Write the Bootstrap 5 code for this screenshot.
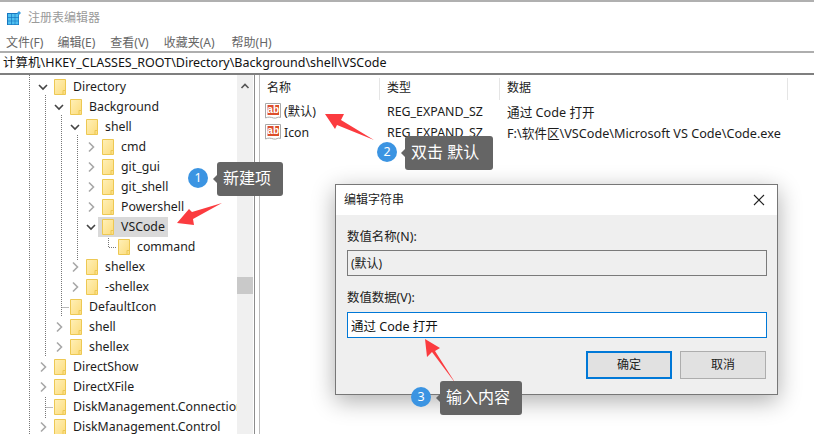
<!DOCTYPE html>
<html lang="zh-CN">
<head>
<meta charset="utf-8">
<title>注册表编辑器</title>
<link rel="stylesheet" href="https://cdn.jsdelivr.net/npm/bootstrap@5.3.0/dist/css/bootstrap.min.css">
<style>
html,body{height:434px;overflow:hidden;background:#fff}
body{font-family:"Noto Sans","Noto Sans CJK SC",sans-serif;font-size:12px;line-height:20px;color:#1c1c1c;position:relative}
.app-frame{height:434px;border-top:2px solid #b0b0b0}
.title-row{height:30px;padding-left:7px;gap:7px;color:#9a9a9a;font-size:12px;padding-top:1px}
.menu-row{height:20px;padding-left:6px;padding-top:1px;color:#666;flex:none}
.menu-row span{margin-right:14px}
.menu-row span:nth-child(2){margin-right:15px}
.menu-row span:nth-child(3){margin-right:15px}
.menu-row span:nth-child(4){margin-right:17px}
.addr-row{flex:none;border-top:2px solid #aeaeae;border-bottom:2px solid #7f7f7f;padding-left:3px;margin-top:-1px;font-size:12.5px;line-height:20px;color:#111;box-sizing:content-box;height:20px}
.main-row{flex:1;min-height:0}
.tree-pane{width:237px;flex:none;position:relative;overflow:hidden;padding-top:2px;font-size:12.3px}
.guide-svg{position:absolute;left:0;top:0}
.tree-row{height:20px;position:relative;white-space:nowrap}
.ind0{padding-left:35px}.ind1{padding-left:51px}.ind2{padding-left:67px}.ind3{padding-left:83px}.ind4{padding-left:99px}
.chev{width:16px;height:20px;flex:none}
.fold{width:14px;height:18px;flex:none;margin-left:2px;margin-right:6px}
.sel-name{background:#d9d9d9;padding-right:3px;margin-left:-1px;padding-left:1px;height:20px}
.sel-name .fold{margin-left:2px}
.scroll-col{width:16px;flex:none;background:#f0f0f0;position:relative}
.scroll-thumb{position:absolute;left:0;right:0;top:202px;height:17px;background:#c9c9c9}
.split-col{width:6px;flex:none;border-left:1px solid #8d8d8d;border-right:1px solid #bdbdbd;margin-left:1px}
.list-pane{flex:1;min-width:0;padding-left:0}
.list-head{height:26px;padding-top:3px}
.list-line{height:21px}
.colname{width:120px;flex:none;padding-left:7px;height:22px;border-right:1px solid #e5e5e5}
.colwide{width:288px;flex:none;padding-left:7px;height:22px;border-right:1px solid #e5e5e5}
.cell-a{width:120px;flex:none;padding-left:5px;gap:2px;font-size:12.3px}
.cell-b{width:120px;flex:none;padding-left:7px;font-size:12.4px;white-space:nowrap}
.cell-c{flex:1;padding-left:7px;white-space:nowrap;font-size:12.65px}
.dlg{position:absolute;left:335px;top:184px;width:443px;height:211px;background:#efefef;border:1px solid #777;box-shadow:0 6px 22px rgba(0,0,0,.32)}
.dlg-head{height:30px;background:#fff;padding:0 8px 0 8px}
.dlg-body{padding:10px 10px 0 11px;font-size:12.4px}
.dlg-label{height:20px;color:#222}
.lab-a{margin:2px 0 3px}
.lab-b{margin:1px 0 4px}
.dlg-field{height:26px;border-radius:0;font-size:12px;line-height:20px;padding:2px 3px;color:#222;font-family:inherit;box-shadow:none!important}
.dlg-field.ro{background:#efefef;border:1px solid #7a7a7a}
.dlg-field.on{background:#fff;border:1px solid #0078d7;color:#111;margin-bottom:13px;font-size:12.5px}
.dlg-gap{height:11px}
.dlg-btn{width:86px;height:28px;padding:0;border-radius:0;font-size:12px;line-height:20px;background:#e1e1e1;color:#222;font-family:inherit}
.dlg-btn.pri{border:2px solid #0078d7}
.dlg-btn.sec{border:1px solid #adadad}
.dlg-btns{gap:8px;margin-right:1px}
.mark-layer{position:absolute;left:0;top:0;pointer-events:none}
.step-dot{position:absolute;width:20px;height:20px;border-radius:50%;background:#3b94e2;color:#fff;font-size:12.5px;line-height:20px;text-align:center}
.step-tip{position:absolute;height:34px;background:#656565;color:#fff;border-radius:3px;font-size:16px;line-height:33px;padding-left:6px;white-space:nowrap}
.step-tip::before{content:"";position:absolute;left:-4px;top:13px;border-style:solid;border-width:4px 4px 4px 0;border-color:transparent #656565 transparent transparent}
</style>
</head>
<body>
<svg width="0" height="0" class="position-absolute">
  <defs>
    <linearGradient id="fg" x1="0" y1="0" x2="1" y2="1"><stop offset="0" stop-color="#fff0b8"/><stop offset="1" stop-color="#fcdc7c"/></linearGradient>
    <symbol id="folder" viewBox="0 0 14 18">
      <path d="M1.5 1.5H12.5V16.5H1.5Z" fill="url(#fg)" stroke="#edc853"/>
      <path d="M10 16.5V12.5H12.5" fill="#fbe08a" stroke="#edc853"/>
    </symbol>
    <symbol id="open" viewBox="0 0 16 20"><path d="M4 8L8 12L12 8" fill="none" stroke="#444" stroke-width="1.6"/></symbol>
    <symbol id="shut" viewBox="0 0 16 20"><path d="M6 5.5L10.5 10L6 14.5" fill="none" stroke="#a8a8a8" stroke-width="1.6"/></symbol>
    <symbol id="abicon" viewBox="0 0 17 17">
      <path d="M.5 .5H15.500V14.500C13 13 11.500 16 8.500 15C6 14.200 3.500 13.500 .5 15Z" fill="#fff" stroke="#a9a9a9"/>
      <rect x="2.500" y="2" width="11.500" height="10" fill="#dc4f2c"/>
      <text x="8.200" y="10.200" text-anchor="middle" font-family="Liberation Sans,sans-serif" font-weight="700" font-size="10" fill="#fff">ab</text>
    </symbol>
  </defs>
</svg>

<div class="app-frame d-flex flex-column">
  <div class="title-row d-flex align-items-center flex-none">
    <svg width="14" height="14" viewBox="0 0 14 14" class="flex-shrink-0">
      <rect x="0" y="2" width="12" height="12" fill="#1877c0"/>
      <g fill="#4fc0f0"><rect x="1" y="3" width="3" height="3"/><rect x="4.700" y="3" width="3" height="3"/><rect x="8.300" y="3" width="3" height="3"/><rect x="1" y="6.700" width="3" height="3"/><rect x="4.700" y="6.700" width="3" height="3"/><rect x="8.300" y="6.700" width="3" height="3"/><rect x="1" y="10.300" width="3" height="3"/><rect x="4.700" y="10.300" width="3" height="3"/><rect x="8.300" y="10.300" width="3" height="3"/></g>
      <path d="M12 0L14 2L12 4L10 2Z" fill="#3aa0e0"/>
    </svg>
    <span>注册表编辑器</span>
  </div>
  <div class="menu-row d-flex align-items-center"><span>文件(F)</span><span>编辑(E)</span><span>查看(V)</span><span>收藏夹(A)</span><span>帮助(H)</span></div>
  <div class="addr-row">计算机\HKEY_CLASSES_ROOT\Directory\Background\shell\VSCode</div>
  <div class="main-row d-flex">
    <div class="tree-pane">
      <svg class="guide-svg" width="237" height="359" viewBox="0 75 237 359">
        <g stroke="#777" stroke-dasharray="1 1" fill="none">
          <path d="M29.500 75V434"/>
          <path d="M45.500 95V357M45.500 397V418"/>
          <path d="M61.500 115V317M61.500 307.500H69"/>
          <path d="M77.500 135V260"/>
          <path d="M108.500 236V247.500H117"/>
          <path d="M45.500 407.500H53"/>
        </g>
      </svg>
      <div class="tree-row ind0 d-flex align-items-center"><svg class="chev"><use href="#open"/></svg><svg class="fold"><use href="#folder"/></svg><span>Directory</span></div>
      <div class="tree-row ind1 d-flex align-items-center"><svg class="chev"><use href="#open"/></svg><svg class="fold"><use href="#folder"/></svg><span>Background</span></div>
      <div class="tree-row ind2 d-flex align-items-center"><svg class="chev"><use href="#open"/></svg><svg class="fold"><use href="#folder"/></svg><span>shell</span></div>
      <div class="tree-row ind3 d-flex align-items-center"><svg class="chev"><use href="#shut"/></svg><svg class="fold"><use href="#folder"/></svg><span>cmd</span></div>
      <div class="tree-row ind3 d-flex align-items-center"><svg class="chev"><use href="#shut"/></svg><svg class="fold"><use href="#folder"/></svg><span>git_gui</span></div>
      <div class="tree-row ind3 d-flex align-items-center"><svg class="chev"><use href="#shut"/></svg><svg class="fold"><use href="#folder"/></svg><span>git_shell</span></div>
      <div class="tree-row ind3 d-flex align-items-center"><svg class="chev"><use href="#shut"/></svg><svg class="fold"><use href="#folder"/></svg><span>Powershell</span></div>
      <div class="tree-row ind3 d-flex align-items-center"><svg class="chev"><use href="#open"/></svg><span class="sel-name d-flex align-items-center"><svg class="fold"><use href="#folder"/></svg><span>VSCode</span></span></div>
      <div class="tree-row ind4 d-flex align-items-center"><span class="chev"></span><svg class="fold"><use href="#folder"/></svg><span>command</span></div>
      <div class="tree-row ind2 d-flex align-items-center"><svg class="chev"><use href="#shut"/></svg><svg class="fold"><use href="#folder"/></svg><span>shellex</span></div>
      <div class="tree-row ind2 d-flex align-items-center"><svg class="chev"><use href="#shut"/></svg><svg class="fold"><use href="#folder"/></svg><span>-shellex</span></div>
      <div class="tree-row ind1 d-flex align-items-center"><span class="chev"></span><svg class="fold"><use href="#folder"/></svg><span>DefaultIcon</span></div>
      <div class="tree-row ind1 d-flex align-items-center"><svg class="chev"><use href="#shut"/></svg><svg class="fold"><use href="#folder"/></svg><span>shell</span></div>
      <div class="tree-row ind1 d-flex align-items-center"><svg class="chev"><use href="#shut"/></svg><svg class="fold"><use href="#folder"/></svg><span>shellex</span></div>
      <div class="tree-row ind0 d-flex align-items-center"><svg class="chev"><use href="#shut"/></svg><svg class="fold"><use href="#folder"/></svg><span>DirectShow</span></div>
      <div class="tree-row ind0 d-flex align-items-center"><svg class="chev"><use href="#shut"/></svg><svg class="fold"><use href="#folder"/></svg><span>DirectXFile</span></div>
      <div class="tree-row ind0 d-flex align-items-center"><span class="chev"></span><svg class="fold"><use href="#folder"/></svg><span>DiskManagement.Connection</span></div>
      <div class="tree-row ind0 d-flex align-items-center"><svg class="chev"><use href="#shut"/></svg><svg class="fold"><use href="#folder"/></svg><span>DiskManagement.Control</span></div>
    </div>
    <div class="scroll-col">
      <svg width="16" height="20" viewBox="0 0 16 20" class="d-block"><path d="M4.500 13L8 9.500L11.500 13" fill="none" stroke="#555" stroke-width="1.600"/></svg>
      <div class="scroll-thumb"></div>
    </div>
    <div class="split-col"></div>
    <div class="list-pane">
      <div class="list-head d-flex">
        <div class="colname">名称</div><div class="colname">类型</div><div class="colwide">数据</div>
      </div>
      <div class="list-line d-flex align-items-center">
        <div class="cell-a d-flex align-items-center"><svg width="17" height="17" class="flex-shrink-0"><use href="#abicon"/></svg><span>(默认)</span></div>
        <div class="cell-b">REG_EXPAND_SZ</div><div class="cell-c">通过 Code 打开</div>
      </div>
      <div class="list-line d-flex align-items-center">
        <div class="cell-a d-flex align-items-center"><svg width="17" height="17" class="flex-shrink-0"><use href="#abicon"/></svg><span>Icon</span></div>
        <div class="cell-b">REG_EXPAND_SZ</div><div class="cell-c">F:\软件区\VSCode\Microsoft VS Code\Code.exe</div>
      </div>
    </div>
  </div>
</div>

<div class="dlg">
  <div class="dlg-head d-flex align-items-center justify-content-between">
    <span>编辑字符串</span>
    <svg width="12" height="12" viewBox="0 0 12 12" class="me-1"><path d="M1 1L11 11M11 1L1 11" stroke="#222" stroke-width="1.100"/></svg>
  </div>
  <div class="dlg-body">
    <div class="dlg-label lab-a">数值名称(N):</div>
    <input class="form-control dlg-field ro" value="(默认)" readonly>
    <div class="dlg-gap"></div>
    <div class="dlg-label lab-b">数值数据(V):</div>
    <input class="form-control dlg-field on" value="通过 Code 打开">
    <div class="dlg-btns d-flex justify-content-end">
      <button class="btn dlg-btn pri" type="button">确定</button>
      <button class="btn dlg-btn sec" type="button">取消</button>
    </div>
  </div>
</div>

<svg class="mark-layer" width="814" height="434" viewBox="0 0 814 434">
  <g fill="#fb3b3f">
    <polygon points="222,203 192,212 189,209 177,223 194,225 193,219"/>
    <polygon points="325,114 344,114 341,120 374,140 337,125 335,129"/>
    <polygon points="425,339 440,348 435,351 456,384 432,352 427,357"/>
  </g>
</svg>
<div class="step-dot" style="left:188px;top:168px">1</div>
<div class="step-tip" style="left:217px;top:162px;width:66px">新建项</div>
<div class="step-dot" style="left:377px;top:142px">2</div>
<div class="step-tip" style="left:405px;top:136px;width:88px">双击 默认</div>
<div class="step-dot" style="left:411px;top:387px">3</div>
<div class="step-tip" style="left:440px;top:381px;width:82px">输入内容</div>
<script src="https://cdn.jsdelivr.net/npm/bootstrap@5.3.0/dist/js/bootstrap.bundle.min.js"></script>
</body>
</html>
